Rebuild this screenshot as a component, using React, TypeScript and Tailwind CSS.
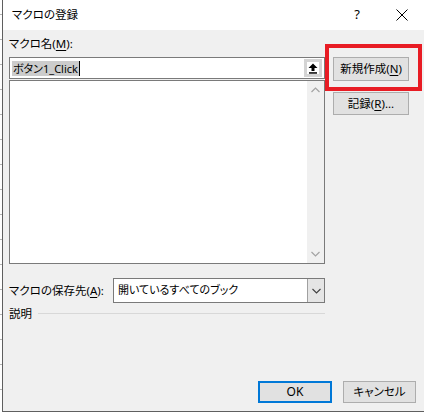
import React from "react";

const font = "font-['Noto_Sans','Noto_Sans_CJK_JP',sans-serif] [font-feature-settings:'palt']";

function Btn({ children, className = "" }: { children: React.ReactNode; className?: string }) {
  return (
    <div
      className={`flex items-center justify-center bg-[#e1e1e1] border border-[#adadad] text-[11.5px] text-[#000] ${className}`}
    >
      {children}
    </div>
  );
}

export default function App() {
  return (
    <div className={`relative w-[424px] h-[413px] overflow-hidden bg-white flex ${font}`}>
      {/* spreadsheet strip behind */}
      <div className="w-[2px] h-full bg-[repeating-linear-gradient(to_bottom,#ffffff_0px,#ffffff_14px,#b4b4b4_14px,#b4b4b4_15px,#ffffff_15px,#ffffff_25px)]" />
      <div className="flex-1 flex flex-col border-l border-b border-[#5f5f5f] h-[412px]">
        {/* title bar */}
        <div className="h-[30px] bg-white flex items-center shrink-0">
          <div className="pl-[9px] text-[11.5px] text-black">マクロの登録</div>
          <div className="ml-auto w-[44px] text-center text-[13px] text-black">?</div>
          <div className="w-[46px] flex justify-center mr-[-1px]">
            <svg width="12" height="12" viewBox="0 0 12 12">
              <path d="M0.5 0.5 L11.5 11.5 M11.5 0.5 L0.5 11.5" stroke="#000" strokeWidth="1" />
            </svg>
          </div>
        </div>
        {/* body */}
        <div className="flex-1 bg-[#f0f0f0] flex flex-col pl-[6px] pr-[8px]">
          <div className="flex">
            <div className="w-[316px] flex flex-col">
              <div className="h-[27px] pt-[6px] text-[11.5px] leading-[16px] text-black">
                マクロ名(<span className="underline underline-offset-2">M</span>):
              </div>
              {/* input */}
              <div className="h-[22px] border border-[#7a7a7a] bg-white flex items-center">
                <div className="ml-[2px] h-[15px] bg-[#cccccc] text-[11px] leading-[15px] px-[1px] text-black">
                  ボタン1_Click
                </div>
                <div className="w-[1px] h-[15px] bg-black" />
                <div className="ml-auto mr-[2px] w-[18px] h-[18px] bg-[#d4d4d4] flex items-center justify-center">
                  <div className="w-[12px] h-[12px] bg-white flex items-center justify-center">
                    <svg width="10" height="11" viewBox="0 0 10 11">
                      <path d="M5 0.5 L9.5 5 L6.5 5 L6.5 8 L3.5 8 L3.5 5 L0.5 5 Z" fill="#000" />
                      <rect x="1" y="9.2" width="8" height="1.5" fill="#000" />
                    </svg>
                  </div>
                </div>
              </div>
              {/* list */}
              <div className="mt-[1px] h-[184px] border border-[#7a7a7a] bg-white flex justify-end">
                <div className="w-[17px] bg-[#f0f0f0] flex flex-col items-center justify-between py-[6px]">
                  <svg width="9" height="6" viewBox="0 0 9 6">
                    <path d="M0.5 5 L4.5 1 L8.5 5" stroke="#a3a3a3" strokeWidth="1.2" fill="none" />
                  </svg>
                  <svg width="9" height="6" viewBox="0 0 9 6">
                    <path d="M0.5 1 L4.5 5 L8.5 1" stroke="#a3a3a3" strokeWidth="1.2" fill="none" />
                  </svg>
                </div>
              </div>
            </div>
            <div className="ml-[8px] flex flex-col pt-[27px]">
              <Btn className="w-[76px] h-[24px]">
                新規作成(<span className="underline underline-offset-2">N</span>)
              </Btn>
              <Btn className="w-[76px] h-[23px] mt-[11px]">
                記録(<span className="underline underline-offset-2">R</span>)...
              </Btn>
            </div>
          </div>
          {/* combobox row */}
          <div className="flex items-center mt-[14px] w-[316px]">
            <div className="w-[104px] text-[11.5px] text-black">
              マクロの保存先(<span className="underline underline-offset-2">A</span>):
            </div>
            <div className="flex-1 h-[25px] border border-[#7a7a7a] bg-white flex items-center">
              <div className="pl-[4px] text-[11px] text-black">開いているすべてのブック</div>
              <div className="ml-auto w-[17px] h-full bg-[#e5e5e5] border-l border-[#a0a0a0] flex items-center justify-center">
                <svg width="9" height="6" viewBox="0 0 9 6">
                  <path d="M0.5 1 L4.5 5 L8.5 1" stroke="#404040" strokeWidth="1.1" fill="none" />
                </svg>
              </div>
            </div>
          </div>
          {/* description */}
          <div className="flex items-center mt-[2px] w-[316px]">
            <div className="text-[11.5px] text-black">説明</div>
            <div className="flex-1 ml-[6px] h-[1px] bg-[#d8d8d8]" />
          </div>
          {/* bottom buttons */}
          <div className="mt-auto mb-[8px] flex justify-end gap-[11px]">
            <div className="w-[74px] h-[22px] flex items-center justify-center bg-[#e1e1e1] border-2 border-[#0078d7] text-[12px] text-black">
              OK
            </div>
            <Btn className="w-[73px] h-[22px]">キャンセル</Btn>
          </div>
        </div>
      </div>
      {/* red highlight */}
      <div className="absolute left-[325px] top-[44px] w-[97px] h-[47px] border-[4px] border-[#e81c24]" />
    </div>
  );
}
